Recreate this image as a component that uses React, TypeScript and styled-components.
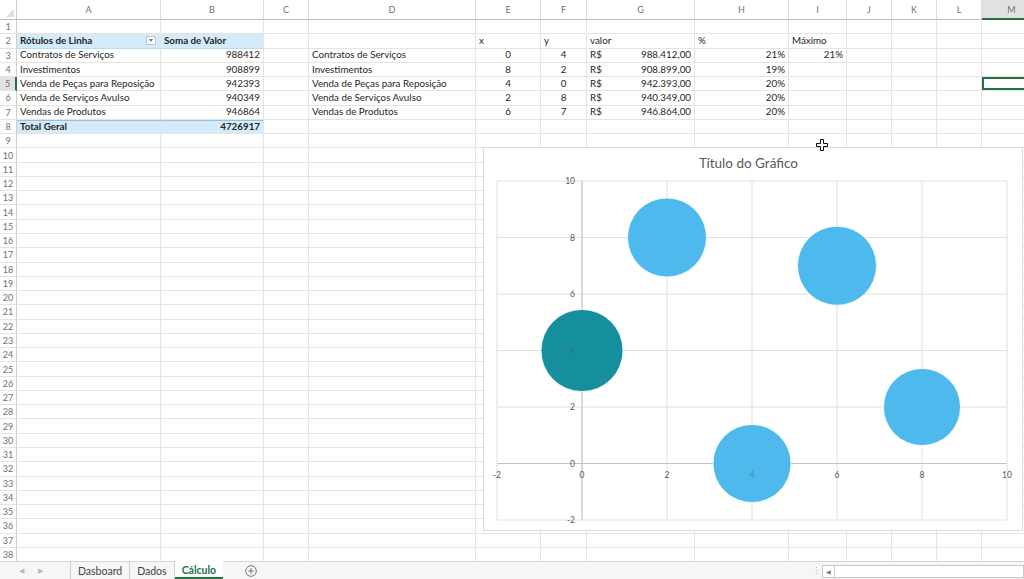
import React from 'react';
import styled, { createGlobalStyle, css } from 'styled-components';

const GlobalStyle = createGlobalStyle`
  html, body { margin: 0; padding: 0; background: #fff; overflow: hidden; }
  body { font-family: Lato, "Liberation Sans", sans-serif; }
  #root { width: 1024px; height: 579px; }
`;

const ROW_H = 14.27;
const HEADER_H = 20;
const ROW_COUNT = 38;

type ColDef = { key: string; w: number };
const COLS: ColDef[] = [
  { key: 'A', w: 144 },
  { key: 'B', w: 103 },
  { key: 'C', w: 45 },
  { key: 'D', w: 167 },
  { key: 'E', w: 65 },
  { key: 'F', w: 46 },
  { key: 'G', w: 108 },
  { key: 'H', w: 94 },
  { key: 'I', w: 58 },
  { key: 'J', w: 45 },
  { key: 'K', w: 45 },
  { key: 'L', w: 45 },
  { key: 'M', w: 60 },
];

type Tone = 'pivotHead' | 'pivotTotal';
type Align = 'left' | 'right' | 'center';
type CellDef = {
  text?: string;
  money?: string;
  bold?: boolean;
  align?: Align;
  tone?: Tone;
  dropdown?: boolean;
};

const CELLS: Record<string, CellDef> = {
  A2: { text: 'Rótulos de Linha', bold: true, tone: 'pivotHead', dropdown: true },
  B2: { text: 'Soma de Valor', bold: true, tone: 'pivotHead' },
  A3: { text: 'Contratos de Serviços' },
  A4: { text: 'Investimentos' },
  A5: { text: 'Venda de Peças para Reposição' },
  A6: { text: 'Venda de Serviços Avulso' },
  A7: { text: 'Vendas de Produtos' },
  B3: { text: '988412', align: 'right' },
  B4: { text: '908899', align: 'right' },
  B5: { text: '942393', align: 'right' },
  B6: { text: '940349', align: 'right' },
  B7: { text: '946864', align: 'right' },
  A8: { text: 'Total Geral', bold: true, tone: 'pivotTotal' },
  B8: { text: '4726917', bold: true, align: 'right', tone: 'pivotTotal' },
  D3: { text: 'Contratos de Serviços' },
  D4: { text: 'Investimentos' },
  D5: { text: 'Venda de Peças para Reposição' },
  D6: { text: 'Venda de Serviços Avulso' },
  D7: { text: 'Vendas de Produtos' },
  E2: { text: 'x' },
  F2: { text: 'y' },
  G2: { text: 'valor' },
  H2: { text: '%' },
  I2: { text: 'Máximo' },
  E3: { text: '0', align: 'center' },
  E4: { text: '8', align: 'center' },
  E5: { text: '4', align: 'center' },
  E6: { text: '2', align: 'center' },
  E7: { text: '6', align: 'center' },
  F3: { text: '4', align: 'center' },
  F4: { text: '2', align: 'center' },
  F5: { text: '0', align: 'center' },
  F6: { text: '8', align: 'center' },
  F7: { text: '7', align: 'center' },
  G3: { money: '988.412,00' },
  G4: { money: '908.899,00' },
  G5: { money: '942.393,00' },
  G6: { money: '940.349,00' },
  G7: { money: '946.864,00' },
  H3: { text: '21%', align: 'right' },
  H4: { text: '19%', align: 'right' },
  H5: { text: '20%', align: 'right' },
  H6: { text: '20%', align: 'right' },
  H7: { text: '20%', align: 'right' },
  I3: { text: '21%', align: 'right' },
};

const SELECTED = { col: 'M', row: 5 };

const Page = styled.div`
  width: 1024px;
  height: 579px;
  display: flex;
  flex-direction: column;
  overflow: hidden;
  background: #fff;
`;

const SheetArea = styled.div`
  position: relative;
  flex: none;
  height: 561px;
  overflow: hidden;
`;

const Grid = styled.div<{ $cols: string }>`
  display: grid;
  grid-template-columns: ${(p) => p.$cols};
  grid-template-rows: ${HEADER_H}px repeat(${ROW_COUNT}, ${ROW_H}px) 1fr;
  height: 100%;
  width: max-content;
`;

const Corner = styled.div`
  position: relative;
  box-sizing: border-box;
  background: #fff;
  border-right: 1px solid #cfcfcf;
  border-bottom: 1px solid #bdbdbd;
  &::after {
    content: '';
    position: absolute;
    right: 2px;
    bottom: 2px;
    width: 0;
    height: 0;
    border-left: 8px solid transparent;
    border-bottom: 8px solid #dedede;
  }
`;

const ColHeader = styled.div<{ $active?: boolean }>`
  box-sizing: border-box;
  display: flex;
  align-items: center;
  justify-content: center;
  font-size: 9px;
  color: #707070;
  background: ${(p) => (p.$active ? '#e1e1e1' : '#fff')};
  border-right: 1px solid #dcdcdc;
  border-bottom: ${(p) => (p.$active ? '2px solid #217346' : '1px solid #bdbdbd')};
`;

const RowHeader = styled.div<{ $active?: boolean }>`
  box-sizing: border-box;
  display: flex;
  align-items: center;
  justify-content: center;
  font-size: 9px;
  color: #707070;
  background: ${(p) => (p.$active ? '#e1e1e1' : '#fff')};
  border-right: ${(p) => (p.$active ? '2px solid #217346' : '1px solid #cfcfcf')};
  border-bottom: 1px solid #e4e4e4;
`;

const toneStyles: Record<Tone, ReturnType<typeof css>> = {
  pivotHead: css`
    background: #d5ebf9;
    border-right-color: #d5ebf9;
    border-bottom-color: #b9dcf2;
  `,
  pivotTotal: css`
    background: #d5ebf9;
    border-right-color: #d5ebf9;
    border-top: 1px solid #8fc3e6;
  `,
};

const Cell = styled.div<{ $align?: Align; $bold?: boolean; $tone?: Tone; $selected?: boolean }>`
  box-sizing: border-box;
  display: flex;
  align-items: center;
  justify-content: ${(p) =>
    p.$align === 'right' ? 'flex-end' : p.$align === 'center' ? 'center' : 'flex-start'};
  gap: 4px;
  padding: 0 3px;
  font-size: 9.8px;
  line-height: 1;
  white-space: nowrap;
  color: #262626;
  font-weight: ${(p) => (p.$bold ? 700 : 400)};
  border-right: 1px solid #e4e4e4;
  border-bottom: 1px solid #e4e4e4;
  ${(p) => p.$tone && toneStyles[p.$tone]}
  ${(p) =>
    p.$selected &&
    css`
      box-shadow: inset 0 0 0 2px #217346;
    `}
`;

const CellText = styled.span`
  flex: 1;
`;

const MoneySymbol = styled.span`
  flex: none;
`;

const MoneyValue = styled.span`
  flex: 1;
  text-align: right;
`;

const Dropdown = styled.span`
  flex: none;
  box-sizing: border-box;
  width: 10px;
  height: 9px;
  margin-right: 1px;
  background: #fff;
  border: 1px solid #c2c2c2;
  display: flex;
  align-items: center;
  justify-content: center;
  &::after {
    content: '';
    width: 0;
    height: 0;
    border-left: 2.5px solid transparent;
    border-right: 2.5px solid transparent;
    border-top: 3px solid #777;
  }
`;

/* ---------- chart ---------- */

const ChartFrame = styled.div`
  position: absolute;
  left: 483px;
  top: 147px;
  width: 540px;
  height: 384px;
  box-sizing: border-box;
  background: #fff;
  border: 1px solid #d9d9d9;
  display: flex;
  flex-direction: column;
`;

const ChartTitle = styled.div`
  flex: none;
  height: 30px;
  line-height: 30px;
  text-align: center;
  font-size: 13.5px;
  color: #595959;
  padding-right: 9px;
`;

const PlotSvg = styled.svg`
  flex: none;
  overflow: visible;
  display: block;
`;

const CursorMark = styled.svg`
  position: absolute;
  left: 816px;
  top: 139px;
  overflow: visible;
`;

const X0 = 13;
const Y0 = 3;
const SX = 42.5;
const SY = 28.25;
const px = (v: number) => X0 + (v + 2) * SX;
const py = (v: number) => Y0 + (10 - v) * SY;
const TICKS = [-2, 0, 2, 4, 6, 8, 10];

type Bubble = { x: number; y: number; r: number; color: string };
const BUBBLES: Bubble[] = [
  { x: 0, y: 4, r: 41, color: '#158e9d' },
  { x: 8, y: 2, r: 38.5, color: '#4db9ec' },
  { x: 4, y: 0, r: 39, color: '#4db9ec' },
  { x: 2, y: 8, r: 39.5, color: '#4db9ec' },
  { x: 6, y: 7, r: 39.5, color: '#4db9ec' },
];

const Chart: React.FC = () => (
  <ChartFrame>
    <ChartTitle>Título do Gráfico</ChartTitle>
    <PlotSvg width={538} height={352} viewBox="0 0 538 352">
      {TICKS.map((t) => (
        <line key={'v' + t} x1={px(t)} x2={px(t)} y1={py(10)} y2={py(-2)} stroke="#e0e0e0" strokeWidth={1} />
      ))}
      {TICKS.map((t) => (
        <line key={'h' + t} x1={px(-2)} x2={px(10)} y1={py(t)} y2={py(t)} stroke="#e0e0e0" strokeWidth={1} />
      ))}
      <line x1={px(0)} x2={px(0)} y1={py(10)} y2={py(-2)} stroke="#c4c4c4" strokeWidth={1} />
      <line x1={px(-2)} x2={px(10)} y1={py(0)} y2={py(0)} stroke="#c4c4c4" strokeWidth={1} />
      {BUBBLES.map((b) => (
        <circle key={b.x + '-' + b.y} cx={px(b.x)} cy={py(b.y)} r={b.r} fill={b.color} stroke="#fff" strokeWidth={0.8} />
      ))}
      {TICKS.map((t) => (
        <text
          key={'yl' + t}
          x={px(0) - 7}
          y={py(t) + 3}
          textAnchor="end"
          fontSize={8.5}
          fill="#595959"
          fontFamily="Lato, 'Liberation Sans', sans-serif"
          opacity={t === 4 ? 0.45 : 1}
        >
          {t}
        </text>
      ))}
      {TICKS.map((t) => (
        <text
          key={'xl' + t}
          x={px(t)}
          y={py(0) + 14.5}
          textAnchor="middle"
          fontSize={8.5}
          fill="#595959"
          fontFamily="Lato, 'Liberation Sans', sans-serif"
          opacity={t === 4 ? 0.55 : 1}
        >
          {t}
        </text>
      ))}
    </PlotSvg>
  </ChartFrame>
);

/* ---------- tab bar ---------- */

const TabBar = styled.div`
  flex: none;
  height: 18px;
  box-sizing: border-box;
  border-top: 1px solid #d6d6d6;
  background: #f6f6f6;
  display: flex;
  align-items: stretch;
  font-size: 10.5px;
  color: #444;
`;

const NavArrows = styled.div`
  width: 71px;
  display: flex;
  align-items: center;
  gap: 14px;
  padding-left: 19px;
  box-sizing: border-box;
  font-size: 7px;
  color: #b8b8b8;
  border-right: 1px solid #cfcfcf;
`;

const Tab = styled.div<{ $active?: boolean }>`
  display: flex;
  align-items: center;
  padding: 0 7px 0 7px;
  border-right: 1px solid #cfcfcf;
  ${(p) =>
    p.$active &&
    css`
      background: #fff;
      color: #217346;
      font-weight: 700;
      border-right: none;
      box-shadow: inset 0 -2px 0 #217346;
      margin-top: -1px;
    `}
`;

const AddSheet = styled.div`
  margin-left: 22px;
  display: flex;
  align-items: center;
`;

const Spacer = styled.div`
  flex: 1;
`;

const Grip = styled.div`
  width: 11px;
  display: flex;
  align-items: center;
  justify-content: center;
  color: #b5b5b5;
  font-size: 9px;
`;

const HScroll = styled.div`
  width: 202px;
  margin: 3px 0 1px 0;
  box-sizing: border-box;
  border: 1px solid #c8c8c8;
  background: #fff;
  display: flex;
`;

const ScrollBtn = styled.div`
  width: 11px;
  border-right: 1px solid #c8c8c8;
  display: flex;
  align-items: center;
  justify-content: center;
  font-size: 6px;
  color: #777;
`;

/* ---------- app ---------- */

const App: React.FC = () => {
  const cols = '17px ' + COLS.map((c) => c.w + 'px').join(' ');
  const rows = Array.from({ length: ROW_COUNT + 1 }, (_, i) => i + 1);
  return (
    <>
      <GlobalStyle />
      <Page>
        <SheetArea>
          <Grid $cols={cols}>
            <Corner />
            {COLS.map((c) => (
              <ColHeader key={c.key} $active={c.key === SELECTED.col}>
                {c.key}
              </ColHeader>
            ))}
            {rows.map((r) => (
              <React.Fragment key={r}>
                <RowHeader $active={r === SELECTED.row}>{r <= ROW_COUNT ? r : ''}</RowHeader>
                {COLS.map((c) => {
                  const id = c.key + r;
                  const d = CELLS[id];
                  const selected = c.key === SELECTED.col && r === SELECTED.row;
                  return (
                    <Cell
                      key={id}
                      $align={d?.align}
                      $bold={d?.bold}
                      $tone={d?.tone}
                      $selected={selected}
                    >
                      {d?.money ? (
                        <>
                          <MoneySymbol>R$</MoneySymbol>
                          <MoneyValue>{d.money}</MoneyValue>
                        </>
                      ) : d?.text ? (
                        d.dropdown ? (
                          <>
                            <CellText>{d.text}</CellText>
                            <Dropdown />
                          </>
                        ) : (
                          d.text
                        )
                      ) : null}
                    </Cell>
                  );
                })}
              </React.Fragment>
            ))}
          </Grid>
          <Chart />
          <CursorMark width={12} height={12} viewBox="0 0 12 12">
            <path
              d="M4.5 0.5 H7.5 V4.5 H11.5 V7.5 H7.5 V11.5 H4.5 V7.5 H0.5 V4.5 H4.5 Z"
              fill="#fff"
              stroke="#111"
              strokeWidth={1}
            />
          </CursorMark>
        </SheetArea>
        <TabBar>
          <NavArrows>
            <span>◀</span>
            <span>▶</span>
          </NavArrows>
          <Tab>Dasboard</Tab>
          <Tab>Dados</Tab>
          <Tab $active>Cálculo</Tab>
          <AddSheet>
            <svg width="12" height="12" viewBox="0 0 12 12">
              <circle cx="6" cy="6" r="5.3" fill="none" stroke="#666" strokeWidth="0.9" />
              <path d="M6 3.2 V8.8 M3.2 6 H8.8" stroke="#666" strokeWidth="0.9" />
            </svg>
          </AddSheet>
          <Spacer />
          <Grip>⋮</Grip>
          <HScroll>
            <ScrollBtn>◀</ScrollBtn>
          </HScroll>
        </TabBar>
      </Page>
    </>
  );
};

export default App;
